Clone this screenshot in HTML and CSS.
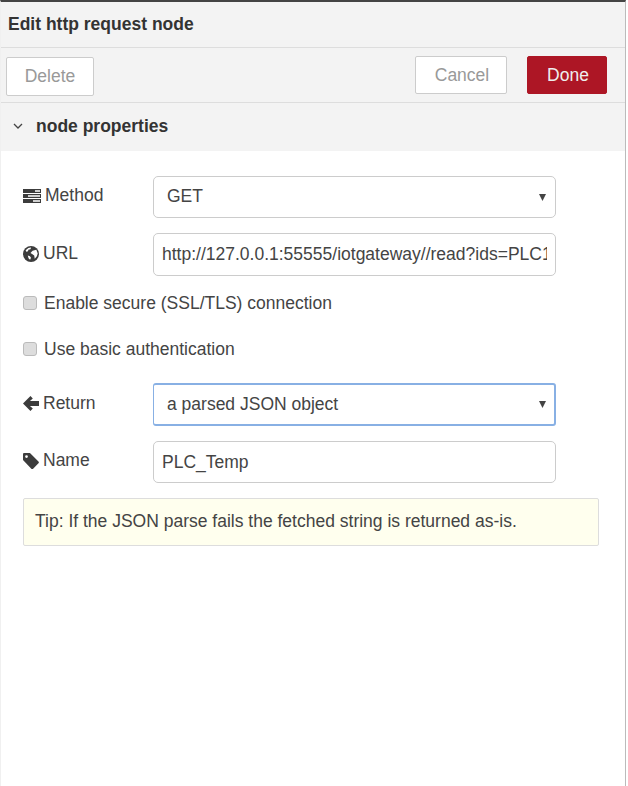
FILE: index.html
```html
<!DOCTYPE html>
<html lang="en">
<head>
  <meta charset="UTF-8">
  <meta name="viewport" content="width=device-width, initial-scale=1.0">
  <title>Edit http request node</title>
  <link rel="stylesheet" href="styles.css">
</head>
<body>

  <div class="tray">
    <div class="tray-title">Edit http request node</div>

    <div class="tray-toolbar">
      <button class="btn btn-delete">Delete</button>
      <div class="toolbar-right">
        <button class="btn btn-cancel">Cancel</button>
        <button class="btn btn-done">Done</button>
      </div>
    </div>

    <div class="section-header">
      <svg class="chevron" width="10" height="6" viewBox="0 0 10 6"><path d="M1 1l4 4 4-4" fill="none" stroke="#444" stroke-width="1.3"/></svg>
      <span>node properties</span>
    </div>

    <div class="form">
      <div class="form-row row-method">
        <label for="method">
          <svg class="icon" width="18" height="14" viewBox="0 0 18 14"><path fill="#3c3c3c" d="M0 0h18v4H0zM0 5h18v4H0zM0 10h18v4H0z"/><path fill="#fff" d="M12 1.300h5v1.400h-5zM5 6.300h12v1.400H5zM10 11.300h7v1.400h-7z"/></svg>
          Method
        </label>
        <div class="select-wrap">
          <select id="method"><option>GET</option></select>
          <svg class="caret" width="7" height="7" viewBox="0 0 7 7"><path fill="#444" d="M0 0h7L3.500 7z"/></svg>
        </div>
      </div>

      <div class="form-row row-url">
        <label for="url">
          <svg class="icon" width="16" height="16" viewBox="0 0 15 15"><circle cx="7.500" cy="7.500" r="7.500" fill="#3c3c3c"/><path fill="#fff" d="M2.500 4L5 1.800 7.600 1.500 7 3 5 3.500 4.700 5 3 5.500zM9 4.500l3.500-1 1.300 3.500-.8 2.500-2 2.500-.5-3-2-1.500-1.500-1zM4.500 9l2 .5 1 1.500-.8 2-1.200-1-.6-1.500z"/></svg>
          URL
        </label>
        <input type="text" id="url" class="text-input" value="http://127.0.0.1:55555/iotgateway//read?ids=PLC1.Temp">
      </div>

      <div class="check-row row-ssl">
        <input type="checkbox" id="ssl">
        <label for="ssl">Enable secure (SSL/TLS) connection</label>
      </div>

      <div class="check-row row-auth">
        <input type="checkbox" id="auth">
        <label for="auth">Use basic authentication</label>
      </div>

      <div class="form-row row-return">
        <label for="ret">
          <svg class="icon" width="16" height="15" viewBox="0 0 15 14"><path fill="#3c3c3c" d="M7 0l2.200 2.200L6.500 4.600H15v4.800H6.500l2.700 2.400L7 14 0 7z"/></svg>
          Return
        </label>
        <div class="select-wrap">
          <select id="ret" class="focused"><option>a parsed JSON object</option></select>
          <svg class="caret" width="7" height="7" viewBox="0 0 7 7"><path fill="#444" d="M0 0h7L3.500 7z"/></svg>
        </div>
      </div>

      <div class="form-row row-name">
        <label for="name">
          <svg class="icon" width="16" height="16" viewBox="0 0 15 15"><path fill="#3c3c3c" fill-rule="evenodd" d="M0 1.200C0 .5.500 0 1.200 0h5.300l8 8c.5.500.5 1.200 0 1.700l-5 5c-.5.500-1.200.5-1.700 0L0 6.500zM3.300 2a1.300 1.300 0 1 0 0 2.600 1.300 1.300 0 0 0 0-2.600z"/></svg>
          Name
        </label>
        <input type="text" id="name" class="text-input name-input" value="PLC_Temp">
      </div>

      <div class="tip">Tip: If the JSON parse fails the fetched string is returned as-is.</div>
    </div>
  </div>

</body>
</html>
```

FILE: styles.css
```css
html,
body {
  height: 100%;
}

body {
  font-family: "Liberation Sans", Arial, sans-serif;
  font-size: 17.5px;
  color: #444;
  background-color: #fff;
  margin: 0;
}

.tray {
  box-sizing: border-box;
  width: 626px;
  height: 100%;
  border-top: 2px solid #444;
  border-right: 1px solid #bbb;
  border-left: 1px solid #f0f0f0;
}

.tray-title {
  height: 45px;
  line-height: 44px;
  padding-left: 7px;
  font-weight: bold;
  color: #333;
  background-color: #f3f3f3;
  border-bottom: 1px solid #ddd;
}

.tray-toolbar {
  display: flex;
  justify-content: space-between;
  height: 55px;
  box-sizing: border-box;
  padding: 8px 18px 0 5px;
  background-color: #f3f3f3;
  border-bottom: 1px solid #ddd;
}

.toolbar-right {
  display: flex;
  gap: 20px;
}

.btn {
  box-sizing: border-box;
  height: 38px;
  font-family: inherit;
  font-size: 17.5px;
  border-radius: 2px;
  background-color: #fff;
  border: 1px solid #ccc;
  color: #999;
  padding: 0;
}

.btn-delete {
  width: 88px;
  height: 39px;
  margin-top: 1px;
}

.btn-cancel {
  width: 92px;
  padding-left: 2px;
}

.btn-done {
  width: 80px;
  padding-left: 2px;
  color: #eee;
  background-color: #ad1625;
  border-color: #ad1625;
}

.section-header {
  display: flex;
  align-items: center;
  box-sizing: border-box;
  height: 48px;
  padding: 0 0 2px 12px;
  font-weight: bold;
  color: #333;
  background-color: #f3f3f3;
}

.chevron {
  margin-right: 13px;
}

.form {
  padding: 25px 0 0 22px;
}

.form-row {
  display: flex;
  align-items: flex-start;
}

.form-row label {
  display: flex;
  align-items: center;
  gap: 4px;
  width: 130px;
}

.icon {
  flex: none;
}

.select-wrap {
  position: relative;
  width: 403px;
}

select {
  display: block;
  width: 100%;
  height: 42px;
  box-sizing: border-box;
  padding: 0 0 2px 13px;
  font-family: inherit;
  font-size: 17.5px;
  color: #444;
  background-color: #fff;
  border: 1px solid #ccc;
  border-radius: 5px;
  appearance: none;
}

select.focused {
  height: 43px;
  border: 1px solid #88b0e4;
  border-width: 2px 2px 2px 1px;
  border-radius: 3px;
}

.caret {
  position: absolute;
  top: 18px;
  right: 10px;
}

.text-input {
  display: block;
  width: 403px;
  height: 43px;
  box-sizing: border-box;
  padding: 0 8px;
  font-family: inherit;
  font-size: 17.5px;
  color: #444;
  background-color: #fff;
  border: 1px solid #ccc;
  border-radius: 5px;
}

.name-input {
  height: 42px;
}

.row-method label {
  padding-top: 9px;
}

.row-url {
  margin-top: 15px;
}

.row-url label {
  padding-top: 10px;
}

.check-row {
  display: flex;
  align-items: center;
  gap: 7px;
  height: 20px;
}

.check-row input {
  box-sizing: border-box;
  flex: none;
  width: 14px;
  height: 14px;
  margin: 0;
  appearance: none;
  background-color: #ddd;
  border: 1px solid #bbb;
  border-radius: 3px;
}

.row-ssl {
  margin-top: 17px;
}

.row-auth {
  margin-top: 26px;
}

.row-return {
  margin-top: 24px;
}

.row-return label {
  padding-top: 10px;
}

.row-name {
  margin-top: 15px;
}

.row-name label {
  padding-top: 9px;
}

.tip {
  box-sizing: border-box;
  width: 576px;
  height: 48px;
  line-height: 44px;
  margin-top: 15px;
  padding-left: 11px;
  background-color: #ffffee;
  border: 1px solid #ddd;
  border-radius: 2px;
}
```
